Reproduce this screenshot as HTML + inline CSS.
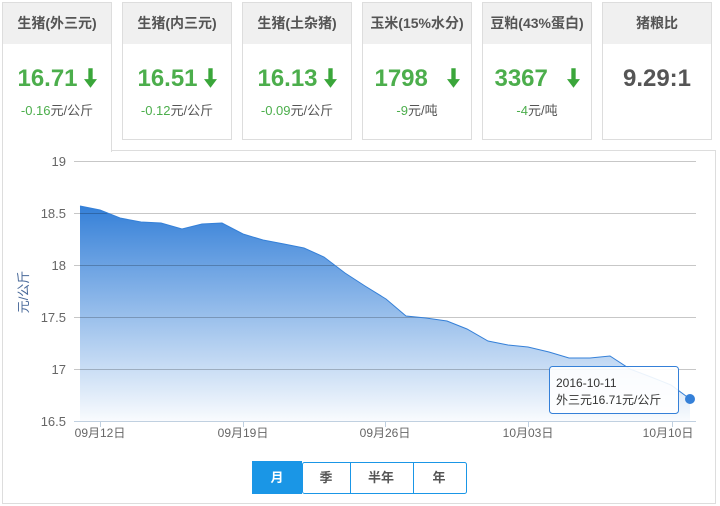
<!DOCTYPE html>
<html><head><meta charset="utf-8"><style>
*{margin:0;padding:0;box-sizing:border-box}
body{width:720px;height:506px;background:#fff;font-family:"Liberation Sans","Noto Sans CJK SC",sans-serif;position:relative;overflow:hidden}
.card{position:absolute;top:2px;width:110px;height:138px;border:1px solid #ddd;background:#fff;text-align:center}
.card .h{height:41px;background:#f0f0f0;line-height:41px;font-size:14px;font-weight:bold;color:#555}
.card .v{margin-top:20px;font-size:24px;font-weight:bold;color:#4cae4c;height:30px;line-height:30px}
.card .c{margin-top:6px;font-size:13px;color:#555}
.card .c b{font-weight:normal;color:#4cae4c}
.arr{display:inline-block;vertical-align:middle;margin-left:6px;margin-top:-4px}
.panel{position:absolute;left:2px;top:150px;width:714px;height:354px;border:1px solid #ddd;background:#fff}
</style></head><body>
<div class="panel"></div>
<div class="card" style="left:2px;height:150px;border-bottom:none;z-index:2"><div class="h">生猪(外三元)</div><div class="v">16.71<svg class="arr" width="13" height="20" viewBox="0 0 12 18"><path d="M4 0h4v10h4L6 18 0 10h4z" fill="#3aa63a"/></svg></div><div class="c"><b>-0.16</b>元/公斤</div></div>
<div class="card" style="left:122px"><div class="h">生猪(内三元)</div><div class="v">16.51<svg class="arr" width="13" height="20" viewBox="0 0 12 18"><path d="M4 0h4v10h4L6 18 0 10h4z" fill="#3aa63a"/></svg></div><div class="c"><b>-0.12</b>元/公斤</div></div>
<div class="card" style="left:242px"><div class="h">生猪(土杂猪)</div><div class="v">16.13<svg class="arr" width="13" height="20" viewBox="0 0 12 18"><path d="M4 0h4v10h4L6 18 0 10h4z" fill="#3aa63a"/></svg></div><div class="c"><b>-0.09</b>元/公斤</div></div>
<div class="card" style="left:362px"><div class="h">玉米(15%水分)</div><div class="v">1798 <svg class="arr" style="margin-left:12px" width="13" height="20" viewBox="0 0 12 18"><path d="M4 0h4v10h4L6 18 0 10h4z" fill="#3aa63a"/></svg></div><div class="c"><b>-9</b>元/吨</div></div>
<div class="card" style="left:482px"><div class="h">豆粕(43%蛋白)</div><div class="v">3367 <svg class="arr" style="margin-left:12px" width="13" height="20" viewBox="0 0 12 18"><path d="M4 0h4v10h4L6 18 0 10h4z" fill="#3aa63a"/></svg></div><div class="c"><b>-4</b>元/吨</div></div>
<div class="card" style="left:602px"><div class="h">猪粮比</div><div class="v" style="color:#555">9.29:1</div></div>
<svg style="position:absolute;left:0;top:0" width="720" height="506">
<defs><linearGradient id="g" gradientUnits="userSpaceOnUse" x1="0" y1="206" x2="0" y2="421"><stop offset="0" stop-color="#3580d8"/><stop offset="1" stop-color="#3580d8" stop-opacity="0.03"/></linearGradient></defs>
<path d="M80 206L100 210L120 218L141 222L161 223L182 229L202 224L222 223L243 234L263 240L284 244L304 248L324 257L345 273L365 286L386 299L406 316L426 318L447 321L467 329L488 341L508 345L528 347L549 352L569 358L590 358L610 356L630 369L651 377L671 385L690 399L690 421L80 421Z" fill="url(#g)"/>
<g stroke="#000" stroke-opacity="0.22" stroke-width="1">
<line x1="74" y1="161.5" x2="696" y2="161.5"/><line x1="74" y1="213.5" x2="696" y2="213.5"/><line x1="74" y1="265.5" x2="696" y2="265.5"/><line x1="74" y1="317.5" x2="696" y2="317.5"/><line x1="74" y1="369.5" x2="696" y2="369.5"/>
</g>
<path d="M80 206L100 210L120 218L141 222L161 223L182 229L202 224L222 223L243 234L263 240L284 244L304 248L324 257L345 273L365 286L386 299L406 316L426 318L447 321L467 329L488 341L508 345L528 347L549 352L569 358L590 358L610 356L630 369L651 377L671 385L690 399" fill="none" stroke="#3580d8" stroke-width="1"/>
<line x1="74" y1="421.5" x2="696" y2="421.5" stroke="#c0d0e0"/>
<g stroke="#c0d0e0"><line x1="100.5" y1="421" x2="100.5" y2="427"/><line x1="243.5" y1="421" x2="243.5" y2="427"/><line x1="385.5" y1="421" x2="385.5" y2="427"/><line x1="528.5" y1="421" x2="528.5" y2="427"/><line x1="672.5" y1="421" x2="672.5" y2="427"/></g>
<g font-size="13" fill="#666" text-anchor="end" font-family="Liberation Sans,sans-serif">
<text x="66" y="166">19</text><text x="66" y="218">18.5</text><text x="66" y="270">18</text><text x="66" y="322">17.5</text><text x="66" y="374">17</text><text x="66" y="426">16.5</text></g>
<g font-size="12" fill="#666" text-anchor="middle" font-family="Liberation Sans,Noto Sans CJK SC,sans-serif">
<text x="100" y="437">09月12日</text><text x="243" y="437">09月19日</text><text x="385" y="437">09月26日</text><text x="528" y="437">10月03日</text><text x="668" y="437">10月10日</text></g>
<text transform="translate(28,292) rotate(-90)" font-size="13" fill="#4a6a9a" text-anchor="middle" font-family="Liberation Sans,Noto Sans CJK SC,sans-serif">元/公斤</text>
<rect x="549.5" y="366.5" width="129" height="47" rx="3" fill="#fff" fill-opacity="0.9" stroke="#3580d8"/>
<text x="556" y="387" font-size="12" fill="#333" font-family="Liberation Sans,Noto Sans CJK SC,sans-serif">2016-10-11</text>
<text x="556" y="404" font-size="12" fill="#333" font-family="Liberation Sans,Noto Sans CJK SC,sans-serif">外三元16.71元/公斤</text>
<circle cx="690" cy="399" r="5" fill="#3580d8"/>
<rect x="302.5" y="462.5" width="164" height="31" rx="2" fill="#fff" stroke="#1a96e6"/>
<rect x="252" y="461" width="50" height="33" fill="#1a96e6"/>
<line x1="350.5" y1="462" x2="350.5" y2="494" stroke="#1a96e6"/><line x1="413.5" y1="462" x2="413.5" y2="494" stroke="#1a96e6"/>
<g font-size="13" font-weight="bold" text-anchor="middle" font-family="Liberation Sans,Noto Sans CJK SC,sans-serif" fill="#555">
<text x="277" y="482" fill="#fff">月</text><text x="326" y="482">季</text><text x="381" y="482">半年</text><text x="439" y="482">年</text></g>
</svg>
</body></html>
